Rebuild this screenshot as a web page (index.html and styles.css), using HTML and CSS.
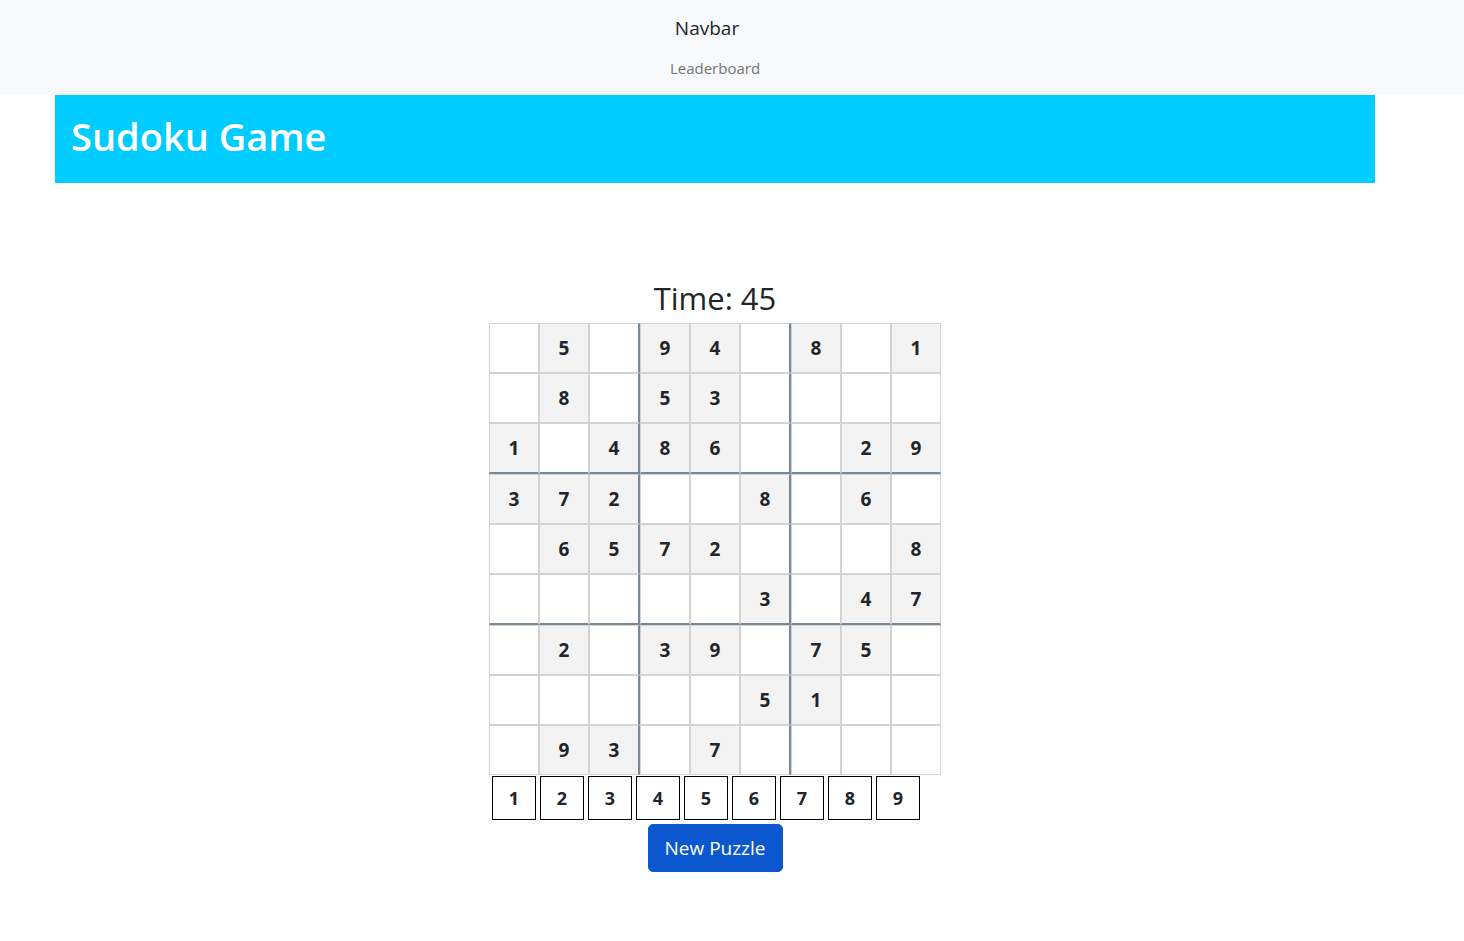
FILE: index.html
```html
<!DOCTYPE html>
<html lang="en">
<head>
<meta charset="utf-8">
<title>Sudoku Game</title>
<link rel="stylesheet" href="styles.css">
</head>
<body>
<nav class="navbar">
  <a class="brand" href="#">Navbar</a>
  <ul class="nav">
    <li><a class="nav-link" href="#">Leaderboard</a></li>
  </ul>
</nav>
<header class="banner">
  <h1>Sudoku Game</h1>
</header>
<main class="game">
  <h2 class="timer">Time: 45</h2>
  <div class="board">
    <div class="cell"></div><div class="cell given">5</div><div class="cell c3"></div><div class="cell given">9</div><div class="cell given">4</div><div class="cell c6"></div><div class="cell given">8</div><div class="cell"></div><div class="cell given">1</div>
    <div class="cell"></div><div class="cell given">8</div><div class="cell c3"></div><div class="cell given">5</div><div class="cell given">3</div><div class="cell c6"></div><div class="cell"></div><div class="cell"></div><div class="cell"></div>
    <div class="cell r3 given">1</div><div class="cell r3"></div><div class="cell r3 c3 given">4</div><div class="cell r3 given">8</div><div class="cell r3 given">6</div><div class="cell r3 c6"></div><div class="cell r3"></div><div class="cell r3 given">2</div><div class="cell r3 given">9</div>
    <div class="cell given">3</div><div class="cell given">7</div><div class="cell c3 given">2</div><div class="cell"></div><div class="cell"></div><div class="cell c6 given">8</div><div class="cell"></div><div class="cell given">6</div><div class="cell"></div>
    <div class="cell"></div><div class="cell given">6</div><div class="cell c3 given">5</div><div class="cell given">7</div><div class="cell given">2</div><div class="cell c6"></div><div class="cell"></div><div class="cell"></div><div class="cell given">8</div>
    <div class="cell r3"></div><div class="cell r3"></div><div class="cell r3 c3"></div><div class="cell r3"></div><div class="cell r3"></div><div class="cell r3 c6 given">3</div><div class="cell r3"></div><div class="cell r3 given">4</div><div class="cell r3 given">7</div>
    <div class="cell"></div><div class="cell given">2</div><div class="cell c3"></div><div class="cell given">3</div><div class="cell given">9</div><div class="cell c6"></div><div class="cell given">7</div><div class="cell given">5</div><div class="cell"></div>
    <div class="cell"></div><div class="cell"></div><div class="cell c3"></div><div class="cell"></div><div class="cell"></div><div class="cell c6 given">5</div><div class="cell given">1</div><div class="cell"></div><div class="cell"></div>
    <div class="cell"></div><div class="cell given">9</div><div class="cell c3 given">3</div><div class="cell"></div><div class="cell given">7</div><div class="cell c6"></div><div class="cell"></div><div class="cell"></div><div class="cell"></div>
  </div>
  <div class="pad">
    <button class="num">1</button><button class="num">2</button><button class="num">3</button><button class="num">4</button><button class="num">5</button><button class="num">6</button><button class="num">7</button><button class="num">8</button><button class="num">9</button>
  </div>
  <button class="btn-new">New Puzzle</button>
</main>
</body>
</html>
```
FILE: styles.css
```css
* { box-sizing: border-box; }
html, body { margin: 0; padding: 0; }
body {
  font-family: "Open Sans", "Noto Sans", "Liberation Sans", sans-serif;
  color: #212529;
  background: #fff;
}
.navbar {
  background: #f8f9fa;
  height: 95px;
  padding: 8px 34px 8px 0;
  display: flex;
  flex-direction: column;
  align-items: center;
}
.brand {
  display: block;
  font-size: 19px;
  line-height: 30px;
  padding: 5px 0;
  margin-right: 16px;
  color: #212529;
  text-decoration: none;
}
.nav { list-style: none; margin: 0; padding: 0; }
.nav-link {
  display: block;
  padding: 8px 0;
  font-size: 15px;
  line-height: 24px;
  color: #747576;
  text-decoration: none;
}
.banner {
  width: 1320px;
  margin: 0 0 0 55px;
  background: #00ccff;
  padding: 17px 16px 23px;
  height: 88px;
}
.banner h1 {
  margin: 0;
  font-size: 38px;
  line-height: 48px;
  font-weight: 600;
  color: #fff;
}
.game {
  width: 1430px;
  display: flex;
  flex-direction: column;
  align-items: center;
  padding-top: 96px;
}
.timer {
  margin: 0 0 6px;
  font-size: 31px;
  line-height: 38px;
  font-weight: 500;
}
.board {
  display: grid;
  grid-template-columns: repeat(9, auto);
  width: 452px;
}
.cell {
  width: 50px;
  height: 50px;
  border: 1px solid #d3d3d3;
  background: #fff;
  display: flex;
  align-items: center;
  justify-content: center;
  font-size: 19px;
  font-weight: 700;
}
.cell.given { background: #f3f3f3; }
.cell.c3, .cell.c6 { width: 51px; border-right: 2px solid #778899; }
.cell.r3 { height: 51px; border-bottom: 2px solid #778899; }
.pad {
  width: 452px;
  display: flex;
  gap: 4px;
  padding-left: 3px;
  margin-top: 1px;
}
.num {
  width: 44px;
  height: 44px;
  border: 1px solid #000;
  background: #fff;
  font-family: inherit;
  font-size: 18px;
  font-weight: 700;
  color: #212529;
  padding: 0;
}
.btn-new {
  margin-top: 4px;
  height: 48px;
  padding: 0 16px;
  font-family: inherit;
  font-size: 19px;
  color: #fff;
  background: #0b57d0;
  border: 1px solid #0b57d0;
  border-radius: 5px;
}
```
